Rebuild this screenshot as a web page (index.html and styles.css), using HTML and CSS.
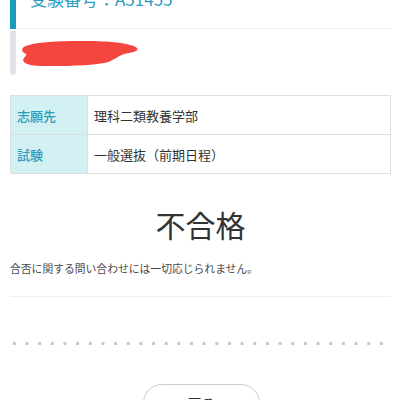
FILE: index.html
```html
<!DOCTYPE html>
<html lang="ja">
<head>
<meta charset="utf-8">
<link rel="stylesheet" href="styles.css">
</head>
<body>
<div class="page">
  <section class="profile">
    <div class="bar">
      <div class="bar-top"></div>
      <div class="bar-bottom"></div>
    </div>
    <div class="profile-body">
      <div class="exam-no">受験番号：A51455</div>
      <div class="name-row">
        <svg class="scribble" viewBox="0 0 122 26">
          <path d="M3 6 C12 1 40 0 66 0 C92 0 112 2 120 7 C123 10 117 12 109 13 C101 15 98 19 90 22 C72 26 42 26 20 26 C8 26 1 23 2 19 C3 16 7 15 4 13 C0 11 0 8 3 6 Z" fill="#f4453f"/>
        </svg>
      </div>
    </div>
  </section>

  <table class="info">
    <tr>
      <th>志願先</th>
      <td>理科二類教養学部</td>
    </tr>
    <tr>
      <th>試験</th>
      <td>一般選抜（前期日程）</td>
    </tr>
  </table>

  <h1 class="result">不合格</h1>
  <p class="notice">合否に関する問い合わせには一切応じられません。</p>
  <hr class="rule">
  <div class="dots"></div>
  <div class="actions">
    <button class="back">戻る</button>
  </div>
</div>
</body>
</html>
```

FILE: styles.css
```css
html, body {
  margin: 0;
  padding: 0;
  background: #ffffff;
}
body {
  font-family: "Noto Sans CJK JP", "Noto Sans", sans-serif;
  color: #333333;
  width: 400px;
  overflow: hidden;
}
.page {
  padding: 0 9px 0 10px;
}
.profile {
  display: flex;
  margin-top: -22px;
}
.bar {
  display: flex;
  flex-direction: column;
  width: 6px;
  flex: none;
}
.bar-top {
  height: 51px;
  background: #1a9db6;
}
.bar-bottom {
  margin-top: 2px;
  height: 44px;
  background: #dfe2e7;
  border-radius: 0 0 4px 4px;
}
.profile-body {
  flex: 1;
}
.exam-no {
  font-size: 17px;
  line-height: 24px;
  color: #2d9dbf;
  padding: 9px 0 17px 14px;
  border-bottom: 1px solid #eeeeee;
}
.name-row {
  padding: 12px 0 0 4px;
}
.scribble {
  display: block;
  width: 120px;
  height: 25px;
}
.info {
  margin-top: 20px;
  width: 100%;
  border-collapse: collapse;
  font-size: 13px;
}
.info th, .info td {
  border: 1px solid #dedede;
  height: 38px;
  padding: 0 0 0 6px;
  text-align: left;
}
.info th {
  width: 70px;
  background: #d3f0f2;
  color: #2a9cc0;
  font-weight: 500;
}
.info td {
  color: #333333;
}
.result {
  margin: 30px 0 0;
  text-align: center;
  font-size: 30px;
  font-weight: 400;
  line-height: 40px;
  color: #333333;
}
.notice {
  margin: 16px 0 0;
  font-size: 10.8px;
  line-height: 16px;
  color: #4a4a4a;
}
.rule {
  margin: 20px 0 0;
  border: 0;
  border-top: 1px solid #eeeeee;
}
.dots {
  margin-top: 44px;
  height: 5px;
  width: 380px;
  margin-left: -2px;
  background-image: radial-gradient(circle, #c4c8d0 1.4px, transparent 2px);
  background-size: 12.67px 5px;
}
.actions {
  display: flex;
  justify-content: center;
  margin-top: 38px;
}
.back {
  width: 117px;
  height: 38px;
  border: 1px solid #cccccc;
  border-radius: 19px;
  background: #ffffff;
  font-family: inherit;
  font-size: 14px;
  color: #333333;
  margin-left: 2px;
}
```
